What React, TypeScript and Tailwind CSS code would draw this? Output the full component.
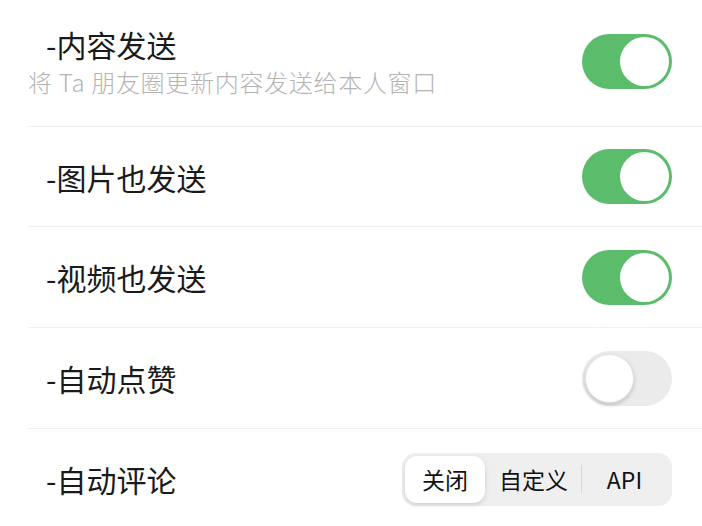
import React, { useState } from "react";

const font = { fontFamily: '"Noto Sans CJK SC", "Noto Sans", sans-serif' };

function Toggle({ on }: { on: boolean }) {
  return (
    <div
      className={`relative w-[90px] h-[55px] rounded-full shrink-0 ${
        on ? "bg-[#5bbd6b]" : "bg-[#ebebeb]"
      }`}
    >
      <div
        className={`absolute top-[3px] w-[49px] h-[49px] rounded-full bg-white ${
          on
            ? "right-[3px]"
            : "left-[3px] shadow-[0_2px_4px_rgba(0,0,0,0.18)] border border-[#e4e4e4]"
        }`}
      />
    </div>
  );
}

function Segmented() {
  const [sel, setSel] = useState(0);
  const items = [
    { label: "关闭", w: "w-[80px]" },
    { label: "自定义", w: "w-[97px]" },
    { label: "API", w: "w-[87px]" },
  ];
  return (
    <div className="flex items-center h-[53px] w-[270px] p-[3px] rounded-[14px] bg-[#efefef]">
      {items.map((it, i) => (
        <React.Fragment key={it.label}>
          {i === 2 && <div className="w-px h-[28px] bg-[#d6d6d6] -mx-px" />}
          <button
            onClick={() => setSel(i)}
            className={`${it.w} h-full flex items-center justify-center text-[23px] text-[#111] rounded-[12px] ${
              sel === i ? "bg-white shadow-[0_2px_5px_rgba(0,0,0,0.14)]" : ""
            }`}
          >
            {it.label}
          </button>
        </React.Fragment>
      ))}
    </div>
  );
}

function Title({ children }: { children: React.ReactNode }) {
  return (
    <div className="ml-[18px] text-[30px] leading-[36px] text-[#1a1a1a]">{children}</div>
  );
}

export default function App() {
  return (
    <div className="w-[702px] h-[526px] bg-white overflow-hidden" style={font}>
      <div className="ml-[28px]">
        <div className="h-[127px] flex items-center justify-between pr-[30px] pt-[25px] pb-[29px] border-b border-[#f0f0f0]">
          <div className="flex flex-col gap-[5px]">
            <Title>-内容发送</Title>
            <div className="text-[24px] leading-[30px] tracking-[0.7px] font-light text-[#b4b4b4]">
              将 Ta 朋友圈更新内容发送给本人窗口
            </div>
          </div>
          <Toggle on />
        </div>
        <div className="h-[100px] flex items-center justify-between pr-[30px] border-b border-[#f0f0f0]">
          <Title>-图片也发送</Title>
          <Toggle on />
        </div>
        <div className="h-[101px] flex items-center justify-between pr-[30px] border-b border-[#f0f0f0]">
          <Title>-视频也发送</Title>
          <Toggle on />
        </div>
        <div className="h-[101px] flex items-center justify-between pr-[30px] border-b border-[#f0f0f0]">
          <Title>-自动点赞</Title>
          <Toggle on={false} />
        </div>
        <div className="h-[100px] flex items-center justify-between pr-[30px]">
          <Title>-自动评论</Title>
          <Segmented />
        </div>
      </div>
    </div>
  );
}
